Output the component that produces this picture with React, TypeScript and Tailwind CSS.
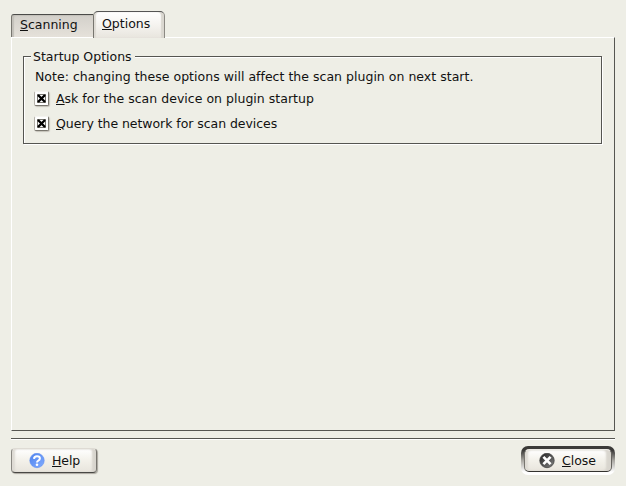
import React from "react";

function Check() {
  return (
    <span className="flex h-[15px] w-[15px] shrink-0 items-center justify-center rounded-[2px] border border-t-[#f5f4f0] border-r-[#7a776f] border-b-[#7a776f] border-l-[#b5b2aa] bg-white shadow-[1px_1px_1px_#c4c1b9]">
      <svg width="11" height="11" viewBox="0 0 11 11">
        <rect x="1.5" y="1.5" width="8" height="8" fill="#fff" stroke="#77756f" />
        <path d="M2 2L9 9M9 2L2 9" stroke="#000" strokeWidth="2.4" />
      </svg>
    </span>
  );
}

function Option({ first, rest, spacing }: { first: string; rest: string; spacing: string }) {
  return (
    <label className="flex h-[15px] items-center gap-[7px]">
      <Check />
      <span className={spacing}>
        <u>{first}</u>
        {rest}
      </span>
    </label>
  );
}

export default function App() {
  return (
    <div className="flex h-[486px] w-[626px] flex-col bg-[#eeeee6] px-[11px] pt-[11px] font-['DejaVu_Sans',sans-serif] text-[12.5px] leading-[15px] whitespace-nowrap text-[#111] [&_u]:underline-offset-1">
      <div className="z-10 -mb-px flex h-[27px] items-start">
        <div className="mt-[3px] h-[23px] w-[82px] rounded-tl-[3px] border-t border-l border-t-[#4b4b49] border-l-[#77756f] bg-linear-to-b from-[#d3d0ca] to-[#e5e1da] pt-[2px] pl-2 shadow-[inset_2px_1px_1px_#c3c0ba]">
          <u>S</u>canning
        </div>
        <div className="h-[27px] w-[72px] rounded-t-[5px] border border-b-0 border-t-[#555] border-r-[#8b8983] border-l-[#77756f] bg-linear-to-b from-white via-[#f5f3ef] to-[#e8e5de] pt-[4px] pl-2 shadow-[inset_2px_0_1px_#dedbd4,inset_-3px_0_1px_#dad7d0]">
          <u>O</u>ptions
        </div>
      </div>
      <div className="h-[394px] w-[604px] border border-t-white border-r-[#555551] border-b-[#555551] border-l-white px-[11px] pt-[18px]">
        <div className="h-[88px] w-[579px] border border-[#555551] pl-[10px] shadow-[1px_1px_0_white,inset_1px_1px_0_white]">
          <div className="-mt-2 -ml-[3px] w-[104px] bg-[#eeeee6] pl-[2px]">Startup Options</div>
          <div className="mt-[5px] pl-px tracking-[0.02px]">
            Note: changing these options will affect the scan plugin on next start.
          </div>
          <div className="mt-[7px] flex flex-col gap-[10px]">
            <Option first="A" rest="sk for the scan device on plugin startup" spacing="tracking-[0.02px]" />
            <Option first="Q" rest="uery the network for scan devices" spacing="tracking-[-0.05px]" />
          </div>
        </div>
      </div>
      <div className="mt-[7px] h-[2px] w-[604px] shrink-0 border-t border-b border-t-[#555551] border-b-white" />
      <div className="mt-[6px] flex w-[604px] justify-between">
        <button className="mt-[2px] flex h-[25px] w-[86px] items-center rounded-[4px] border border-t-[#dedbd4] border-r-[#77756f] border-b-[#484744] border-l-[#8b8983] bg-linear-to-b from-white via-[#f3f1ea] to-[#e8e5dd] pl-[17px] shadow-[1px_1px_1px_#aaa79f,inset_3px_0_2px_#dedbd4,inset_-4px_0_2px_#d8d5ce]">
          <svg width="16" height="16" viewBox="0 0 16 16">
            <defs>
              <linearGradient id="blue" x1="0" y1="0" x2="1" y2="1">
                <stop stopColor="#4d82ed" />
                <stop offset="1" stopColor="#83adff" />
              </linearGradient>
            </defs>
            <circle cx="8" cy="7.5" r="7.2" fill="url(#blue)" stroke="#5c8cf0" strokeWidth=".6" />
            <path d="M5 5.9Q5.1 3.3 8 3.3Q10.9 3.3 10.9 5.6Q10.9 6.9 9.3 7.6Q8 8.2 8 9.5" fill="none" stroke="#fff" strokeWidth="2" />
            <circle cx="8" cy="11.8" r="1.3" fill="#fff" />
          </svg>
          <span className="ml-[7px] tracking-[-0.1px]"><u>H</u>elp</span>
        </button>
        <div className="h-[29px] w-[94px] rounded-[7px] bg-linear-to-b from-[#3b3a38] from-15% via-[#aaa8a2] via-50% to-white to-90% p-[3px]">
          <button className="flex h-[23px] w-[88px] items-center rounded-[5px] border border-t-[#eceae4] border-r-[#66645f] border-b-[#33322f] border-l-[#77756f] bg-linear-to-b from-white via-[#f3f1ea] to-[#e8e5dd] pl-[14px] shadow-[inset_3px_0_2px_#dedbd4,inset_-5px_0_2px_#d8d5ce]">
            <svg width="16" height="16" viewBox="0 0 16 16">
              <defs>
                <linearGradient id="dark" x1="0" y1="0" x2="1" y2="1">
                  <stop stopColor="#222" />
                  <stop offset="1" stopColor="#828282" />
                </linearGradient>
              </defs>
              <circle cx="8" cy="7.5" r="7.2" fill="url(#dark)" stroke="#444" strokeWidth=".8" />
              <path d="M4.4 3.9L11.6 11.1M11.6 3.9L4.4 11.1" stroke="#fff" strokeWidth="2.7" />
            </svg>
            <span className="ml-[7px]"><u>C</u>lose</span>
          </button>
        </div>
      </div>
    </div>
  );
}
